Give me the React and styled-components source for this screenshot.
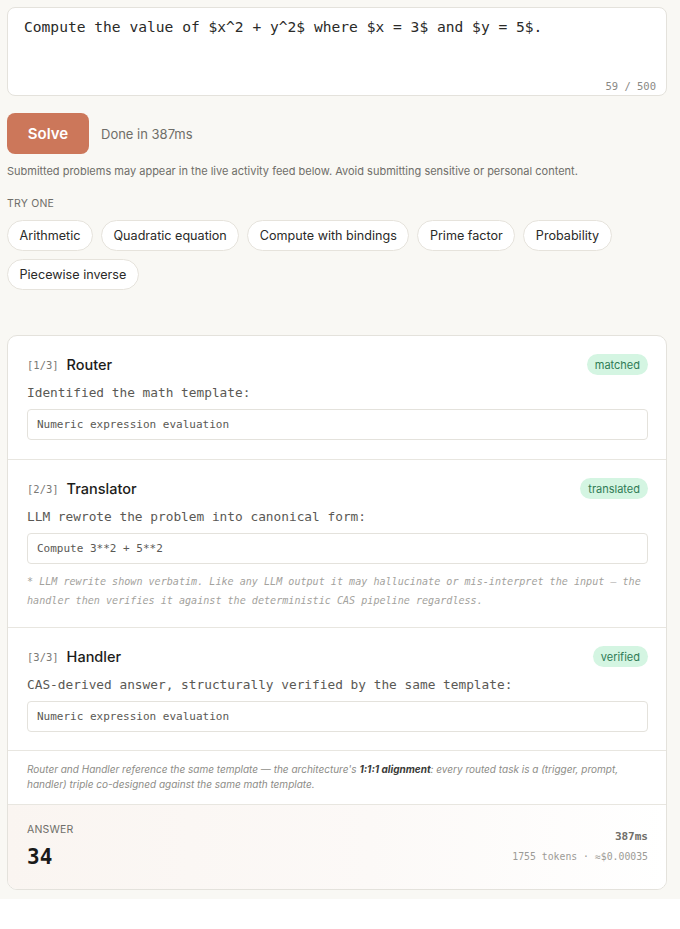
import React from "react";
import styled, { createGlobalStyle } from "styled-components";

const GlobalStyle = createGlobalStyle`
  html, body { margin: 0; padding: 0; background: #ffffff; }
  body { font-family: Inter, "Noto Sans", sans-serif; color: #1c1c1a; }
  * { box-sizing: border-box; }
`;

const mono = `"DejaVu Sans Mono", "Liberation Mono", monospace`;

const Page = styled.div`
  background: #f9f8f4;
  padding: 7px 13px 9px 7px;
  display: flex;
  flex-direction: column;
`;

const InputCard = styled.div`
  height: 89px;
  background: #fff;
  border: 1px solid #e4e2dc;
  border-radius: 8px;
  padding: 9px 10px 2px 16px;
  display: flex;
  flex-direction: column;
  justify-content: space-between;
`;

const InputText = styled.div`
  font-family: ${mono};
  font-size: 14.6px;
  line-height: 20px;
  color: #2a2a28;
`;

const Counter = styled.div`
  align-self: flex-end;
  font-family: ${mono};
  font-size: 10.5px;
  line-height: 14px;
  color: #8a8985;
`;

const ActionRow = styled.div`
  margin-top: 17px;
  display: flex;
  align-items: center;
  gap: 12px;
`;

const SolveButton = styled.button`
  width: 82px;
  height: 41px;
  border: none;
  border-radius: 8px;
  background: #cc775a;
  color: #fff;
  font-family: Inter, sans-serif;
  font-size: 15px;
  font-weight: 600;
  cursor: pointer;
`;

const Status = styled.span`
  font-size: 13px;
  color: #6f6e69;
`;

const Disclaimer = styled.p`
  margin: 9px 0 0;
  font-size: 11px;
  line-height: 16px;
  color: #6f6e69;
`;

const SectionLabel = styled.div`
  margin-top: 18px;
  font-size: 10.5px;
  line-height: 14px;
  color: #6f6e69;
  letter-spacing: 0.2px;
  text-transform: uppercase;
`;

const Chips = styled.div`
  margin-top: 9px;
  display: flex;
  flex-wrap: wrap;
  gap: 8px;
`;

const Chip = styled.button`
  height: 31px;
  padding: 0 11.5px;
  background: #fff;
  border: 1px solid #e6e3dc;
  border-radius: 16px;
  font-family: Inter, sans-serif;
  font-size: 12.6px;
  color: #2a2a28;
  cursor: pointer;
`;

const PipelineCard = styled.div`
  margin-top: 45px;
  background: #fff;
  border: 1px solid #e4e2dc;
  border-radius: 10px;
  overflow: hidden;
`;

const Stage = styled.section`
  padding: 18px 18px ${(p) => p.$bottom}px 19px;
  border-bottom: 1px solid #e8e6e0;
`;

const StageHeader = styled.div`
  display: flex;
  align-items: center;
  height: 21px;
`;

const StageIndex = styled.span`
  font-family: ${mono};
  font-size: 10.5px;
  color: #7a7975;
  margin-right: 8px;
`;

const StageTitle = styled.span`
  font-size: 14.5px;
  font-weight: 500;
  color: #1c1c1a;
  flex: 1;
`;

const Badge = styled.span`
  height: 21px;
  padding: 0 8px;
  border-radius: 11px;
  background: #d4f5e2;
  color: #2f7b55;
  font-size: 11px;
  display: inline-flex;
  align-items: center;
`;

const StageDesc = styled.div`
  margin-top: 9px;
  font-family: ${mono};
  font-size: 12.8px;
  line-height: 18px;
  color: #5a5955;
`;

const OutputBox = styled.div`
  margin-top: 7px;
  height: 31px;
  border: 1px solid #e4e2dc;
  border-radius: 4px;
  padding: 0 9px;
  display: flex;
  align-items: center;
  font-family: ${mono};
  font-size: 11px;
  color: #5a5955;
`;

const StageNote = styled.p`
  margin: 8px 0 0;
  font-family: ${mono};
  font-style: italic;
  font-size: 10.1px;
  line-height: 19px;
  color: #a3a29d;
`;

const Footnote = styled.p`
  margin: 0;
  padding: 11px 18px 12px 19px;
  border-bottom: 1px solid #e8e6e0;
  font-style: italic;
  font-size: 10px;
  line-height: 15px;
  color: #8d8c87;

  strong {
    font-weight: 700;
    color: #3a3a37;
  }
`;

const AnswerSection = styled.div`
  height: 84px;
  padding: 18px 18px 0 19px;
  display: flex;
  justify-content: space-between;
  background: linear-gradient(90deg, #faf5f1 0%, #fcf9f7 55%, #ffffff 100%);
`;

const AnswerLeft = styled.div`
  display: flex;
  flex-direction: column;
`;

const AnswerLabel = styled.div`
  font-size: 10.5px;
  line-height: 14px;
  letter-spacing: 0.2px;
  color: #6f6e69;
`;

const AnswerValue = styled.div`
  margin-top: 7px;
  font-family: ${mono};
  font-weight: 700;
  font-size: 21px;
  line-height: 26px;
  color: #1a1a18;
`;

const AnswerMeta = styled.div`
  padding-top: 7px;
  display: flex;
  flex-direction: column;
  align-items: flex-end;
  gap: 6px;
  font-family: ${mono};
`;

const Timing = styled.div`
  font-size: 11px;
  line-height: 14px;
  font-weight: 700;
  color: #6f6e69;
`;

const Cost = styled.div`
  font-size: 9.8px;
  line-height: 14px;
  color: #9c9b96;
`;

const Below = styled.div`
  height: 40px;
  background: #fff;
`;

const examples = [
  "Arithmetic",
  "Quadratic equation",
  "Compute with bindings",
  "Prime factor",
  "Probability",
  "Piecewise inverse",
];

const problem = "Compute the value of $x^2 + y^2$ where $x = 3$ and $y = 5$.";

export default function App() {
  return (
    <>
      <GlobalStyle />
      <Page>
        <InputCard>
          <InputText>{problem}</InputText>
          <Counter>{problem.length} / 500</Counter>
        </InputCard>

        <ActionRow>
          <SolveButton>Solve</SolveButton>
          <Status>Done in 387ms</Status>
        </ActionRow>

        <Disclaimer>
          Submitted problems may appear in the live activity feed below. Avoid submitting sensitive or
          personal content.
        </Disclaimer>

        <SectionLabel>Try one</SectionLabel>
        <Chips>
          {examples.map((e) => (
            <Chip key={e}>{e}</Chip>
          ))}
        </Chips>

        <PipelineCard>
          <Stage $bottom={19}>
            <StageHeader>
              <StageIndex>[1/3]</StageIndex>
              <StageTitle>Router</StageTitle>
              <Badge>matched</Badge>
            </StageHeader>
            <StageDesc>Identified the math template:</StageDesc>
            <OutputBox>Numeric expression evaluation</OutputBox>
          </Stage>

          <Stage $bottom={17}>
            <StageHeader>
              <StageIndex>[2/3]</StageIndex>
              <StageTitle>Translator</StageTitle>
              <Badge>translated</Badge>
            </StageHeader>
            <StageDesc>LLM rewrote the problem into canonical form:</StageDesc>
            <OutputBox>Compute 3**2 + 5**2</OutputBox>
            <StageNote>
              * LLM rewrite shown verbatim. Like any LLM output it may hallucinate or mis-interpret the
              input — the handler then verifies it against the deterministic CAS pipeline regardless.
            </StageNote>
          </Stage>

          <Stage $bottom={18}>
            <StageHeader>
              <StageIndex>[3/3]</StageIndex>
              <StageTitle>Handler</StageTitle>
              <Badge>verified</Badge>
            </StageHeader>
            <StageDesc>CAS-derived answer, structurally verified by the same template:</StageDesc>
            <OutputBox>Numeric expression evaluation</OutputBox>
          </Stage>

          <Footnote>
            Router and Handler reference the same template — the architecture's{" "}
            <strong>1:1:1 alignment</strong>: every routed task is a (trigger, prompt, handler) triple
            co-designed against the same math template.
          </Footnote>

          <AnswerSection>
            <AnswerLeft>
              <AnswerLabel>ANSWER</AnswerLabel>
              <AnswerValue>34</AnswerValue>
            </AnswerLeft>
            <AnswerMeta>
              <Timing>387ms</Timing>
              <Cost>1755 tokens · ≈$0.00035</Cost>
            </AnswerMeta>
          </AnswerSection>
        </PipelineCard>
      </Page>
      <Below />
    </>
  );
}
